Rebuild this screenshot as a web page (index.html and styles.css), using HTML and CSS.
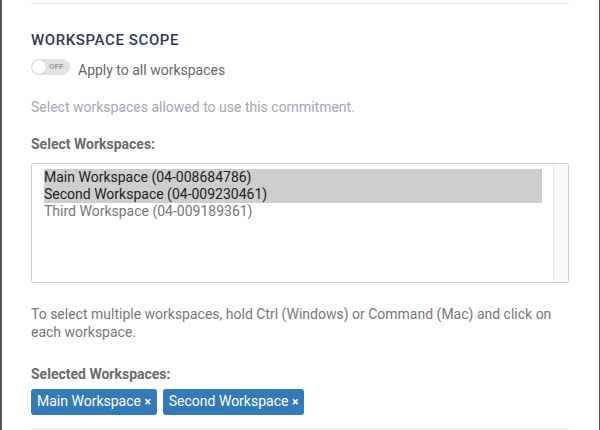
FILE: index.html
```html
<!DOCTYPE html>
<html lang="en">
<head>
    <meta charset="UTF-8">
    <title>Workspace Scope</title>
    <link rel="stylesheet" href="styles.css">
</head>
<body>
    <div class="frame">
        <div class="section">
            <hr class="rule">

            <h3 class="section-title">Workspace Scope</h3>

            <!-- Toggle -->
            <div class="toggle-row">
                <span class="toggle">
                    <span class="toggle-knob"></span>
                    <span class="toggle-text">OFF</span>
                </span>
                <span class="toggle-label">Apply to all workspaces</span>
            </div>

            <p class="hint">Select workspaces allowed to use this commitment.</p>

            <label class="field-label">Select Workspaces:</label>
            <div class="listbox">
                <div class="options">
                    <div class="option selected">Main Workspace (04-008684786)</div>
                    <div class="option selected">Second Workspace (04-009230461)</div>
                    <div class="option">Third Workspace (04-009189361)</div>
                </div>
                <div class="scroll-track"></div>
            </div>

            <p class="help">To select multiple workspaces, hold Ctrl (Windows) or Command (Mac) and click on each workspace.</p>

            <label class="field-label">Selected Workspaces:</label>
            <div class="tags">
                <span class="tag">Main Workspace <span class="tag-x">×</span></span>
                <span class="tag">Second Workspace <span class="tag-x">×</span></span>
            </div>

            <hr class="rule rule-bottom">
        </div>
    </div>
</body>
</html>
```

FILE: styles.css
```css
html, body {
    margin: 0;
    padding: 0;
    background-color: #fff;
}
body {
    font-family: Roboto, "Liberation Sans", Arial, sans-serif;
    color: #666;
}
.frame {
    height: 430px;
    border-left: 2px solid #555;
    border-right: 1px solid #555;
    overflow: hidden;
}
.section {
    padding: 3px 30px 0 29px;
}
.rule {
    margin: 0;
    border: 0;
    border-top: 1px solid #e8e8e8;
}
.rule-bottom {
    margin-top: 13px;
}
.section-title {
    margin: 26px 0 0;
    font-size: 15px;
    line-height: 20px;
    font-weight: 500;
    letter-spacing: 0.6px;
    text-transform: uppercase;
    color: #2f3a5a;
}

/* Toggle */
.toggle-row {
    display: flex;
    align-items: flex-start;
    gap: 8px;
    margin-top: 9px;
}
.toggle {
    position: relative;
    display: inline-block;
    width: 39px;
    height: 16px;
    border-radius: 8px;
    background-color: #e2e2e2;
}
.toggle-knob {
    position: absolute;
    left: 1px;
    top: 1px;
    width: 14px;
    height: 14px;
    border-radius: 50%;
    background-color: #fff;
    box-shadow: 0 0 1px rgba(0, 0, 0, 0.25);
}
.toggle-text {
    position: absolute;
    left: 18px;
    top: 0;
    font-size: 8px;
    line-height: 16px;
    font-weight: 700;
    color: #999;
}
.toggle-label {
    margin-top: 1px;
    font-size: 14px;
    line-height: 20px;
    color: #666;
}
.hint {
    margin: 17px 0 0;
    font-size: 14px;
    line-height: 20px;
    color: #a5a8b3;
}
.field-label {
    display: block;
    margin-top: 18px;
    font-size: 14px;
    line-height: 18px;
    font-weight: 700;
    color: #6b6b6b;
}

/* Multi select */
.listbox {
    display: flex;
    height: 118px;
    margin-top: 10px;
    border: 1px solid #ccc;
    border-radius: 3px;
    overflow: hidden;
}
.options {
    flex: 1;
    padding: 5px 11px 0 12px;
}
.option {
    font-size: 14px;
    line-height: 17px;
    color: #777;
}
.option.selected {
    background-color: #cecece;
    color: #222;
}
.scroll-track {
    width: 14px;
    border-left: 1px solid #e6e6e6;
    background-color: #f9f9f9;
}
.help {
    margin: 22px 0 0;
    font-size: 14px;
    line-height: 18px;
    color: #777;
}
.help + .field-label {
    margin-top: 24px;
}

/* Tags */
.tags {
    display: flex;
    gap: 6px;
    margin-top: 6px;
}
.tag {
    padding: 0 6px;
    font-size: 14px;
    line-height: 25px;
    color: #fff;
    background-color: #337ab7;
    border-radius: 3px;
}
.tag-x {
    font-weight: 700;
    font-size: 12px;
}
```
